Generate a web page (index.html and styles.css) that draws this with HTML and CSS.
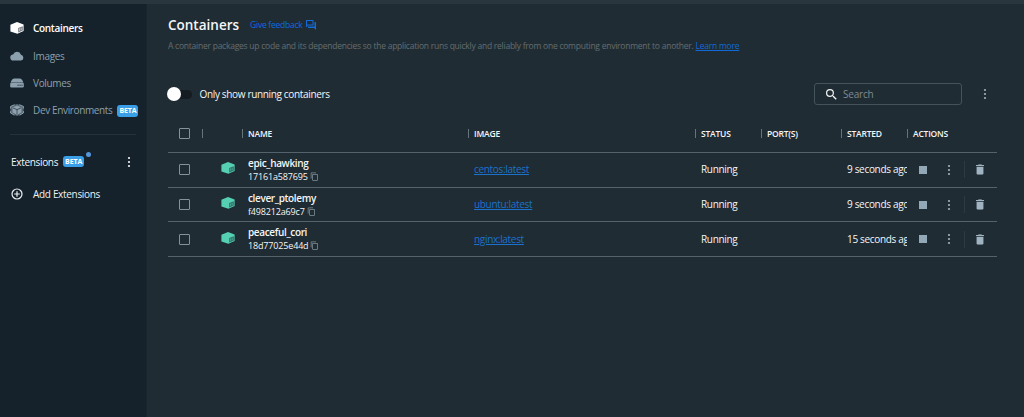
FILE: index.html
```html
<!DOCTYPE html>
<html lang="en">
<head>
<meta charset="utf-8">
<title>Containers</title>
<link rel="stylesheet" href="styles.css">
</head>
<body>
<svg class="defs" width="0" height="0" aria-hidden="true">
  <symbol id="cube" viewBox="0 0 14 12"><path d="M7 0 13.6 2.4V9L7.4 11.8 0.4 9.5V2.7Z" fill="currentColor"/><path d="M8.2 6.1 12.8 4.3V8.4L8.2 10.4Z" fill="var(--cut)" opacity=".6"/><path d="M9.6 6.4V8.9M11.2 5.8V8.3" stroke="currentColor" stroke-width=".6"/></symbol>
  <symbol id="dots" viewBox="0 0 4 12"><circle cx="2" cy="2" r="1.1"/><circle cx="2" cy="6" r="1.1"/><circle cx="2" cy="10" r="1.1"/></symbol>
  <symbol id="copy" viewBox="0 0 24 24"><path fill="currentColor" d="M16 1H4a2 2 0 0 0-2 2v14h2V3h12V1zm3 4H8a2 2 0 0 0-2 2v14c0 1.100.9 2 2 2h11a2 2 0 0 0 2-2V7a2 2 0 0 0-2-2zm0 16H8V7h11v14z"/></symbol>
  <symbol id="trash" viewBox="5 3 14 18"><path fill="currentColor" d="M6 19c0 1.100.9 2 2 2h8c1.100 0 2-.9 2-2V7H6v12zM19 4h-3.500l-1-1h-5l-1 1H5v2h14V4z"/></symbol>
</svg>
<div class="topbar"></div>
<div class="app">
  <nav class="sidebar">
    <a class="nav active"><svg class="ico" viewBox="0 0 14 12"><use href="#cube"/></svg><span>Containers</span></a>
    <a class="nav"><svg class="ico" viewBox="0 0 14 12"><path fill="currentColor" d="M3.500 10.500a3 3 0 0 1-.4-6A4.200 4.200 0 0 1 11 4.800a2.900 2.900 0 0 1 0 5.700Z"/></svg><span>Images</span></a>
    <a class="nav"><svg class="ico" viewBox="0 0 14 12"><path fill="currentColor" d="M.6 5.500Q2 1.700 4.300 1.500H9.700Q12 1.700 13.400 5.500Z"/><rect x=".2" y="5.800" width="13.600" height="4.700" rx="1.200" fill="currentColor"/><path d="M7.500 8.200h1.200M9.500 8.200h1.200M11.500 8.200h1" stroke="#15222b" stroke-width="1"/></svg><span>Volumes</span></a>
    <a class="nav"><svg class="ico" viewBox="0 0 14 12"><path fill="currentColor" opacity=".55" d="M7 0 13.600 2.500V9L7 12 .4 9V2.500Z"/><path fill="currentColor" d="M7 1.500 11.500 3.400V8.500L7 10.800 2.500 8.500V3.400Z"/><path d="M3 3.900 7 5.700 11 3.900M7 5.700V10.200" stroke="#15222b" stroke-width=".6" fill="none"/><path d="M.6 4.500V2.400L4.800.7M9.200.7 13.400 2.400V4.500M13.400 7.200V9L9.500 11.200M4.500 11.200.6 9V7.200" stroke="currentColor" stroke-width="1" fill="none"/></svg><span class="dev">Dev Environments</span><b class="beta">BETA</b></a>
    <hr class="rule">
    <div class="ext"><span>Extensions</span><b class="beta small">BETA</b><i class="dot"></i><svg class="more" viewBox="0 0 4 12"><use href="#dots"/></svg></div>
    <a class="nav add"><svg class="ico" viewBox="0 0 14 12"><circle cx="7" cy="6" r="5" fill="none" stroke="currentColor" stroke-width="1.200"/><path d="M7 3.200V8.800M4.200 6H9.800" stroke="currentColor" stroke-width="1.200"/></svg><span>Add Extensions</span></a>
  </nav>
  <main class="main">
    <header class="head"><h1>Containers</h1><a class="feedback">Give feedback</a><svg class="chat" viewBox="2 2 20 20"><path fill="currentColor" d="M15 4v7H5.200L4 12.200V4h11m1-2H3a1 1 0 0 0-1 1v14l4-4h10a1 1 0 0 0 1-1V3a1 1 0 0 0-1-1zm5 4h-2v9H6v2a1 1 0 0 0 1 1h11l4 4V7a1 1 0 0 0-1-1z"/></svg></header>
    <p class="desc">A container packages up code and its dependencies so the application runs quickly and reliably from one computing environment to another. <a>Learn more</a></p>
    <div class="tools">
      <span class="switch"><i></i></span><span class="only">Only show running containers</span>
      <div class="search"><svg viewBox="3 3 18 18"><path fill="currentColor" d="M15.500 14h-.79l-.28-.27A6.470 6.470 0 0 0 16 9.500 6.500 6.500 0 1 0 9.500 16c1.610 0 3.090-.59 4.230-1.570l.27.28v.79l5 4.990L20.490 19l-4.990-5zm-6 0a4.500 4.500 0 1 1 0-9 4.500 4.500 0 0 1 0 9z"/></svg><span>Search</span></div>
      <svg class="more grey" viewBox="0 0 4 12"><use href="#dots"/></svg>
    </div>
    <section class="table">
      <div class="row th"><div class="check"><i></i></div><div class="sep"></div><div class="sep">NAME</div><div class="sep">IMAGE</div><div class="sep">STATUS</div><div class="sep">PORT(S)</div><div class="sep">STARTED</div><div class="sep">ACTIONS</div></div>
      <div class="row"><div class="check"><i></i></div><div class="cube"><svg viewBox="0 0 14 12"><use href="#cube"/></svg></div><div class="name"><b>epic_hawking</b><div class="id"><span>17161a587695</span><svg viewBox="0 0 24 24"><use href="#copy"/></svg></div></div><div class="cell"><a>centos:latest</a></div><div class="cell">Running</div><div></div><div class="cell ago">9 seconds ago</div><div class="acts"><i class="stop"></i><svg class="more grey" viewBox="0 0 4 12"><use href="#dots"/></svg><i class="bar"></i><svg class="trash" viewBox="5 3 14 18"><use href="#trash" x="5" y="3" width="14" height="18"/></svg></div></div>
      <div class="row"><div class="check"><i></i></div><div class="cube"><svg viewBox="0 0 14 12"><use href="#cube"/></svg></div><div class="name"><b>clever_ptolemy</b><div class="id"><span>f498212a69c7</span><svg viewBox="0 0 24 24"><use href="#copy"/></svg></div></div><div class="cell"><a>ubuntu:latest</a></div><div class="cell">Running</div><div></div><div class="cell ago">9 seconds ago</div><div class="acts"><i class="stop"></i><svg class="more grey" viewBox="0 0 4 12"><use href="#dots"/></svg><i class="bar"></i><svg class="trash" viewBox="5 3 14 18"><use href="#trash" x="5" y="3" width="14" height="18"/></svg></div></div>
      <div class="row"><div class="check"><i></i></div><div class="cube"><svg viewBox="0 0 14 12"><use href="#cube"/></svg></div><div class="name"><b>peaceful_cori</b><div class="id"><span>18d77025e44d</span><svg viewBox="0 0 24 24"><use href="#copy"/></svg></div></div><div class="cell"><a>nginx:latest</a></div><div class="cell">Running</div><div></div><div class="cell ago">15 seconds ago</div><div class="acts"><i class="stop"></i><svg class="more grey" viewBox="0 0 4 12"><use href="#dots"/></svg><i class="bar"></i><svg class="trash" viewBox="5 3 14 18"><use href="#trash" x="5" y="3" width="14" height="18"/></svg></div></div>
    </section>
  </main>
</div>
</body>
</html>
```
FILE: styles.css
```css
* { box-sizing: border-box; }
body { margin: 0; height: 417px; overflow: hidden; background: #202c33; color: #f4f6f7; font: 10px/14px "Open Sans", "Noto Sans", sans-serif; letter-spacing: -.32px; white-space: nowrap; --cut: #202c33; }
.defs { position: absolute; }
svg { display: block; flex: none; fill: currentColor; }
.topbar { height: 4px; background: #29363e; }
.app { display: flex; height: 413px; }
.sidebar { width: 147px; flex: none; background: #15222b; padding-top: 10.500px; border-right: 1px solid #19262e; --cut: #15222b; }
.nav { display: flex; align-items: center; height: 27.400px; padding-left: 10px; color: #8ca0ad; }
.nav .ico { width: 14px; height: 12px; margin-right: 9px; }
.active { color: #fff; font-weight: 600; }
.dev { letter-spacing: -.36px; }
.beta { display: flex; justify-content: center; width: 21px; margin: 1px 0 0 5px; height: 12px; border-radius: 3px; background: #3a9fe6; color: #fff; font-size: 7px; line-height: 12px; font-weight: 700; letter-spacing: -.1px; }
.rule { margin: 10px 10px 0; border: 0; height: 1px; background: #24323a; }
.ext { display: flex; align-items: center; height: 18px; margin-top: 18px; padding: 0 15px 0 11px; }
.beta.small { height: 11px; line-height: 11px; margin-top: -1px; }
.dot { width: 5px; height: 5px; margin: -15px 0 0 2px; border-radius: 50%; background: #5596d8; }
.more { width: 4px; height: 12px; }
.ext .more { margin-left: auto; }
.grey { color: #a3b1ba; }
.add { margin-top: 9.500px; color: #edf1f3; }
.main { flex: 1; padding: 12px 27px 0 21px; }
.head { display: flex; align-items: center; height: 18px; }
h1 { margin: 0; font-size: 13.500px; line-height: 18px; font-weight: 600; letter-spacing: 0; }
.feedback { margin-left: 11px; color: #0c6be0; font-size: 8.500px; letter-spacing: -.25px; }
.chat { width: 10px; height: 10px; margin-left: 4px; color: #146ad6; }
.desc { margin: 6px 0 0; height: 11px; font-size: 8.500px; line-height: 11px; letter-spacing: -.24px; color: #646c70; }
.desc a { color: #116ad8; text-decoration: underline; }
.tools { display: flex; align-items: center; height: 22px; margin-top: 32px; padding-right: 10px; }
.switch { width: 24px; height: 9px; border-radius: 5px; background: #141c22; display: flex; align-items: center; }
.switch i { width: 14px; height: 14px; margin-left: -1px; border-radius: 50%; background: #fff; flex: none; }
.only { margin-left: 7.500px; letter-spacing: -.34px; }
.search { display: flex; align-items: center; width: 148px; height: 22px; margin-left: auto; padding-left: 11px; border: 1px solid #44525a; border-radius: 3px; color: #7e8b93; letter-spacing: -.2px; }
.search svg { width: 11px; height: 11px; margin-right: 6px; color: #f4f6f7; }
.tools .more { margin-left: 21px; }
.table { margin-top: 10px; }
.row { display: grid; grid-template-columns: 34px 40px 226px 227px 66px 80px 66px 90px; align-items: center; height: 34.700px; border-bottom: 1px solid #53626b; width: 829px; }
.th { height: 38px; font-size: 8.500px; font-weight: 600; letter-spacing: -.2px; }
.sep { height: 9px; line-height: 9px; padding-left: 5px; border-left: 1px solid #65737b; }
.check i { display: block; width: 11px; height: 11px; margin-left: 11px; border: 1px solid #84929a; border-radius: 1px; }
.cube { padding-left: 19px; color: #55d0b2; }
.cube svg { width: 14px; height: 12px; margin-top: -3px; }
.name { padding-left: 6px; line-height: 13px; }
.name b { display: block; font-weight: 600; letter-spacing: -.36px; }
.id { display: flex; align-items: center; font-size: 9px; letter-spacing: -.16px; }
.id svg { width: 9px; height: 9px; margin-left: 2px; color: #82919a; }
.cell { padding-left: 6px; margin-top: -1px; }
.cell a { color: #1a72cc; text-decoration: underline; }
.ago { overflow: hidden; }
.acts { display: flex; align-items: center; padding-left: 12px; color: #a0b3c0; }
.stop { width: 8px; height: 8px; background: #92a8b7; }
.acts .more { margin-left: 20px; }
.bar { width: 1px; height: 17px; margin-left: 13px; background: #2c3b43; }
.trash { width: 8px; height: 11px; margin-left: 11px; }
```
